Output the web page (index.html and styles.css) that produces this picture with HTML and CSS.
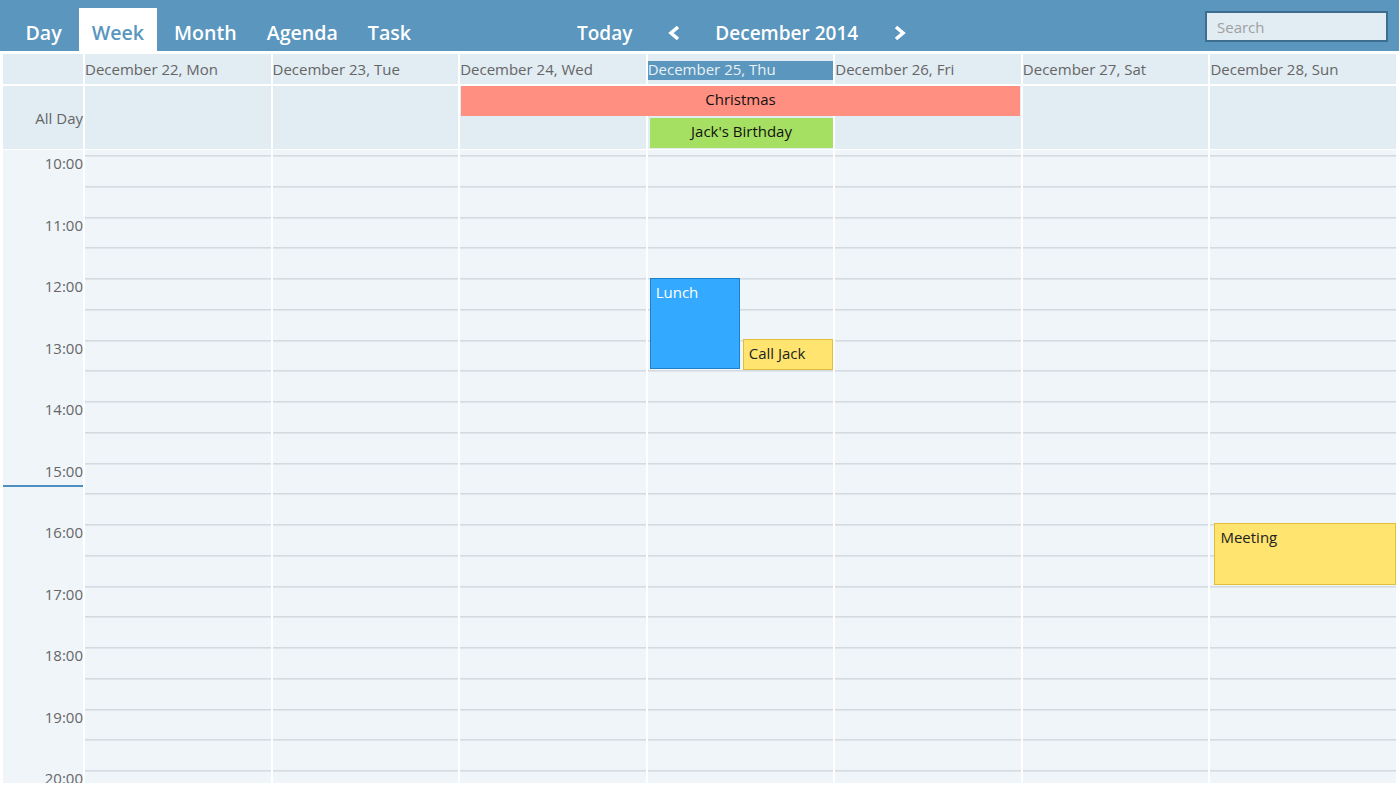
FILE: index.html
```html
<!DOCTYPE html>
<html lang="en">
<head>
  <meta charset="UTF-8">
  <meta name="viewport" content="width=device-width, initial-scale=1.0">
  <title>Week Schedule</title>
  <link rel="stylesheet" href="styles.css">
</head>
<body>

<!-- Top toolbar -->
<div class="toolbar">
  <div class="views">
    <span class="view">Day</span>
    <span class="view active">Week</span>
    <span class="view">Month</span>
    <span class="view">Agenda</span>
    <span class="view">Task</span>
  </div>
  <div class="navigator">
    <span class="today">Today</span>
    <span class="arrow prev">
      <svg width="14" height="16" viewBox="0 0 14 16"><polyline points="11,2 4,8 11,14" fill="none" stroke="#fff" stroke-width="3.6" stroke-linejoin="miter"/></svg>
    </span>
    <span class="month-title">December 2014</span>
    <span class="arrow next">
      <svg width="14" height="16" viewBox="0 0 14 16"><polyline points="3,2 10,8 3,14" fill="none" stroke="#fff" stroke-width="3.6" stroke-linejoin="miter"/></svg>
    </span>
  </div>
  <div class="search-box">
    <input type="text" placeholder="Search">
  </div>
</div>

<!-- Day names -->
<div class="row day-header">
  <div class="cell"></div>
  <div class="cell"><span class="date">December 22, Mon</span></div>
  <div class="cell"><span class="date">December 23, Tue</span></div>
  <div class="cell"><span class="date">December 24, Wed</span></div>
  <div class="cell"><span class="date current">December 25, Thu</span></div>
  <div class="cell"><span class="date">December 26, Fri</span></div>
  <div class="cell"><span class="date">December 27, Sat</span></div>
  <div class="cell"><span class="date">December 28, Sun</span></div>
</div>

<!-- All day events -->
<div class="row allday">
  <div class="cell allday-label">All Day</div>
  <div class="cell c2"></div>
  <div class="cell c3"></div>
  <div class="cell c4"></div>
  <div class="cell c5"></div>
  <div class="cell c6"></div>
  <div class="cell c7"></div>
  <div class="cell c8"></div>
  <div class="allday-event christmas">Christmas</div>
  <div class="allday-event birthday">Jack's Birthday</div>
</div>

<!-- Hours -->
<div class="row timegrid">
  <div class="times">
    <div class="now-line"></div>
    <div class="hour">10:00</div>
    <div class="hour">11:00</div>
    <div class="hour">12:00</div>
    <div class="hour">13:00</div>
    <div class="hour">14:00</div>
    <div class="hour">15:00</div>
    <div class="hour">16:00</div>
    <div class="hour">17:00</div>
    <div class="hour">18:00</div>
    <div class="hour">19:00</div>
    <div class="hour">20:00</div>
  </div>
  <div class="day"></div>
  <div class="day"></div>
  <div class="day"></div>
  <div class="day">
    <div class="event lunch">Lunch</div>
    <div class="event call">Call Jack</div>
  </div>
  <div class="day"></div>
  <div class="day"></div>
  <div class="day">
    <div class="event meeting">Meeting</div>
  </div>
</div>

</body>
</html>
```

FILE: styles.css
```css
/* Page */
body {
  margin: 0;
  background-color: #fff;
  font-family: "Open Sans", "Noto Sans", sans-serif;
  width: 1399px;
  height: 787px;
  overflow: hidden;
}

/* Toolbar */
.toolbar {
  display: grid;
  grid-template-columns: 577px 1fr auto;
  align-items: end;
  height: 51px;
  background-color: #5a96bd;
  color: #fff;
}

.views {
  display: flex;
  gap: 5px;
  padding-left: 13px;
}

.view {
  height: 43px;
  line-height: 50px;
  padding: 0 12.5px;
  font-size: 19.6px;
  font-weight: 600;
}

.view.active {
  background-color: #fff;
  color: #5a96bd;
}

.navigator {
  display: flex;
  align-items: center;
  height: 43px;
  padding-top: 7px;
  box-sizing: border-box;
  font-size: 19px;
  font-weight: 600;
}

.arrow {
  display: flex;
}

.arrow.prev {
  margin-left: 35px;
  margin-right: 34px;
}

.arrow.next {
  margin-left: 35px;
}

.search-box {
  align-self: start;
  padding: 11px 11px 0 0;
}

.search-box input {
  width: 183px;
  height: 31px;
  box-sizing: border-box;
  border: 2px solid #3e6e8f;
  background-color: #e1ecf3;
  padding: 0 10px;
  font-family: inherit;
  font-size: 15px;
  color: #555;
  outline: none;
}

.search-box input::placeholder {
  color: #a0a0a0;
}

/* Shared column layout */
.row {
  display: grid;
  grid-template-columns: 80px repeat(7, 1fr);
  column-gap: 2px;
  margin-left: 3px;
  width: 1393px;
}

.cell {
  background-color: #e1ecf3;
}

.day-header {
  margin-top: 3px;
  height: 30px;
}

.date {
  display: block;
  margin-top: 7px;
  height: 19px;
  line-height: 17px;
  font-size: 15px;
  color: #666;
  white-space: nowrap;
}

.date.current {
  background-color: #5a96bd;
  color: #e8f1f7;
}

/* All day */
.allday {
  margin-top: 2px;
  grid-template-rows: 31px 32px;
}

.allday .cell {
  grid-row: 1 / 3;
}

.allday-label {
  grid-column: 1;
  display: flex;
  align-items: center;
  justify-content: flex-end;
  font-size: 15px;
  color: #666;
}

.c2 { grid-column: 2; }
.c3 { grid-column: 3; }
.c4 { grid-column: 4; }
.c5 { grid-column: 5; }
.c6 { grid-column: 6; }
.c7 { grid-column: 7; }
.c8 { grid-column: 8; }

.allday-event {
  height: 30px;
  line-height: 27px;
  text-align: center;
  font-size: 15px;
  color: #111;
}

.christmas {
  grid-column: 4 / 7;
  grid-row: 1;
  margin: 0 1px;
  background-color: #ff8f80;
}

.birthday {
  grid-column: 5;
  grid-row: 2;
  margin: 1px 0 0 2px;
  background-color: #a6e062;
}

/* Hour grid */
.timegrid {
  margin-top: 1px;
  height: 633px;
  grid-template-rows: 633px;
  overflow: hidden;
}

.times {
  position: relative;
  background-color: #f0f5f9;
  padding-top: 5px;
}

.hour {
  height: 61.5px;
  line-height: 17px;
  text-align: right;
  font-size: 15px;
  color: #666;
}

.now-line {
  position: absolute;
  top: 335px;
  left: 0;
  right: 0;
  height: 2px;
  background-color: #4f8fbf;
}

.day {
  position: relative;
  background-color: #f0f5f9;
  background-image: repeating-linear-gradient(to bottom, #d3dae0 0, #d3dae0 1px, #dfe5ea 1px, #dfe5ea 2px, transparent 2px, transparent 30.75px);
  background-position: 0 5px;
  background-repeat: repeat-x;
}

/* Events */
.event {
  position: absolute;
  box-sizing: border-box;
  padding: 3px 5px;
  font-size: 15px;
  line-height: 20px;
  color: #222;
}

.lunch {
  top: 128px;
  left: 2px;
  width: 90px;
  height: 91px;
  background-color: #33a9ff;
  border: 1px solid #1e7fcb;
  color: #fff;
}

.call {
  top: 189px;
  left: 95px;
  right: 0;
  height: 31px;
  padding-top: 3px;
  background-color: #ffe570;
  border: 1px solid #e0bf3c;
}

.meeting {
  top: 373px;
  left: 4px;
  right: 0;
  height: 62px;
  background-color: #ffe570;
  border: 1px solid #e0bf3c;
}
```
